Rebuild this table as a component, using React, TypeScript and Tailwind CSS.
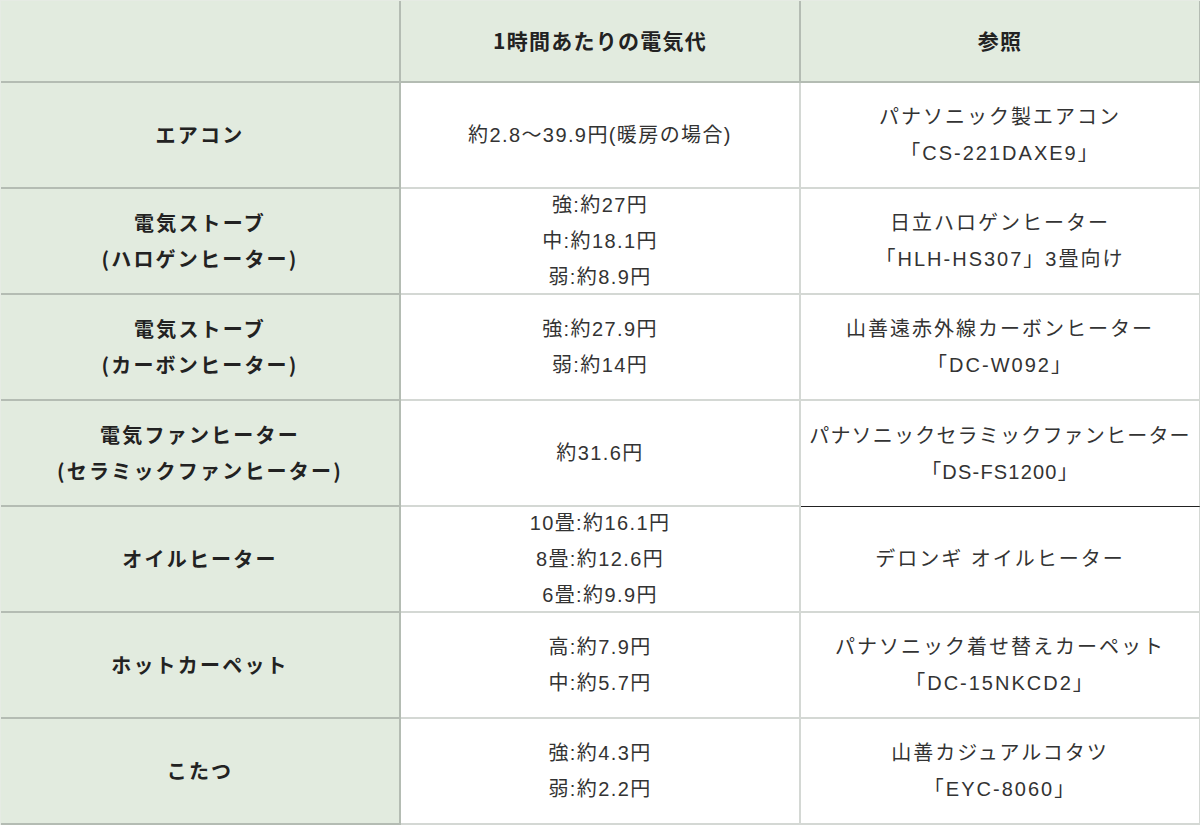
import React from "react";

const rows: { name: string[]; cost: string[]; ref: string[]; nowrap?: boolean; dark?: boolean }[] = [
  { name: ["エアコン"], cost: ["約2.8～39.9円(暖房の場合)"], ref: ["パナソニック製エアコン", "「CS-221DAXE9」"] },
  { name: ["電気ストーブ", "(ハロゲンヒーター)"], cost: ["強:約27円", "中:約18.1円", "弱:約8.9円"], ref: ["日立ハロゲンヒーター", "「HLH-HS307」3畳向け"] },
  { name: ["電気ストーブ", "(カーボンヒーター)"], cost: ["強:約27.9円", "弱:約14円"], ref: ["山善遠赤外線カーボンヒーター", "「DC-W092」"] },
  { name: ["電気ファンヒーター", "(セラミックファンヒーター)"], cost: ["約31.6円"], ref: ["パナソニックセラミックファンヒーター", "「DS-FS1200」"], nowrap: true, dark: true },
  { name: ["オイルヒーター"], cost: ["10畳:約16.1円", "8畳:約12.6円", "6畳:約9.9円"], ref: ["デロンギ オイルヒーター"] },
  { name: ["ホットカーペット"], cost: ["高:約7.9円", "中:約5.7円"], ref: ["パナソニック着せ替えカーペット", "「DC-15NKCD2」"] },
  { name: ["こたつ"], cost: ["強:約4.3円", "弱:約2.2円"], ref: ["山善カジュアルコタツ", "「EYC-8060」"] },
];

const font = { fontFamily: '"Liberation Sans", "Noto Sans CJK JP", sans-serif' };
const boldFont = { fontFamily: '"Noto Sans CJK JP", "Noto Sans", sans-serif' };

export default function App() {
  return (
    <div className="w-[1200px] h-[825px] bg-white text-[#333333]" style={font}>
      <div className="grid grid-cols-[400px_400px_400px] grid-rows-[82px_repeat(7,106px)] border-t border-l border-[#e6ebe4]">
        <div className="bg-[#e2ebdf] border-r-2 border-b-2 border-[#b4bcb3]" />
        <div
          className="bg-[#e2ebdf] border-r-2 border-b-2 border-[#b4bcb3] flex items-center justify-center text-[21px] font-bold tracking-[0.06em] text-[#222]"
          style={boldFont}
        >
          1時間あたりの電気代
        </div>
        <div
          className="bg-[#e2ebdf] border-r-2 border-b-2 border-[#b4bcb3] flex items-center justify-center text-[21px] font-bold tracking-[0.06em] text-[#222]"
          style={boldFont}
        >
          参照
        </div>
        {rows.map((r, i) => (
          <React.Fragment key={i}>
            <div
              className="bg-[#e2ebdf] border-r-2 border-b-2 border-[#b4bcb3] flex flex-col items-center justify-center text-[20px] leading-[36px] font-bold tracking-[0.11em] text-[#222]"
              style={boldFont}
            >
              {r.name.map((t, j) => (
                <div key={j}>{t}</div>
              ))}
            </div>
            <div className="bg-white border-r-2 border-b-2 border-[#d4d8d4] flex flex-col items-center justify-center text-[20px] leading-[36px] tracking-[0.07em]">
              {r.cost.map((t, j) => (
                <div key={j}>{t}</div>
              ))}
            </div>
            <div
              className={
                "bg-white border-r-2 border-[#d4d8d4] flex flex-col items-center justify-center text-[20px] leading-[36px] tracking-[0.1em] whitespace-nowrap overflow-visible " +
                (r.dark ? "border-b border-b-[#222]" : "border-b-2")
              }
            >
              {r.ref.map((t, j) => (
                <div key={j} className={r.nowrap ? "tracking-[0.06em]" : ""}>
                  {t}
                </div>
              ))}
            </div>
          </React.Fragment>
        ))}
      </div>
    </div>
  );
}
